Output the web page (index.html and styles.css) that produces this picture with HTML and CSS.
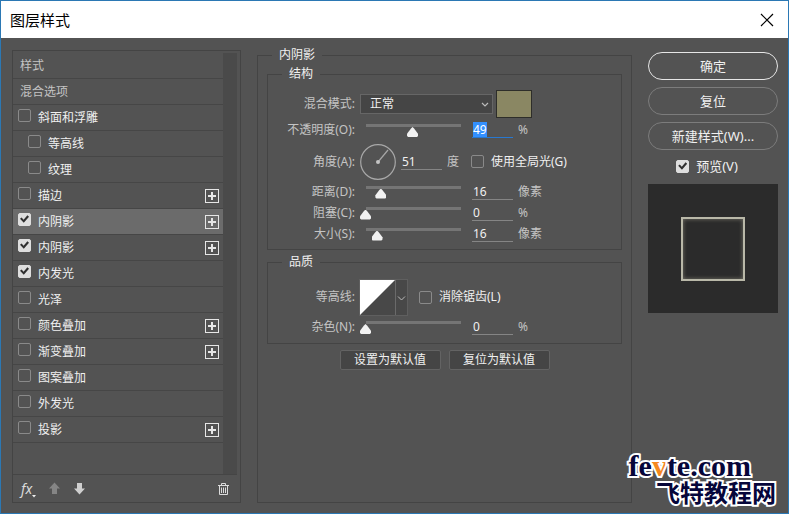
FILE: index.html
```html
<!DOCTYPE html>
<html lang="zh-CN">
<head>
    <meta charset="UTF-8">
    <meta name="viewport" content="width=device-width, initial-scale=1.0">
    <title>图层样式</title>
    <link rel="stylesheet" href="styles.css">
</head>
<body>
    <div class="dialog">
        <header class="titlebar">
            <h1>图层样式</h1>
            <button class="close" aria-label="关闭">
                <svg width="14" height="14" viewBox="0 0 14 14"><path d="M1 1L13 13M13 1L1 13" stroke="#000" stroke-width="1.2"/></svg>
            </button>
        </header>
        <main class="content">
            <aside class="styles-panel">
                <div class="list-wrap">
                    <ul class="style-list">
                        <li class="plain">样式</li>
                        <li class="plain">混合选项</li>
                        <li><label><input type="checkbox">斜面和浮雕</label></li>
                        <li class="sub"><label><input type="checkbox">等高线</label></li>
                        <li class="sub"><label><input type="checkbox">纹理</label></li>
                        <li><label><input type="checkbox">描边</label><button class="add" aria-label="添加描边"></button></li>
                        <li class="selected"><label><input type="checkbox" checked>内阴影</label><button class="add" aria-label="添加内阴影"></button></li>
                        <li><label><input type="checkbox" checked>内阴影</label><button class="add" aria-label="添加内阴影"></button></li>
                        <li><label><input type="checkbox" checked>内发光</label></li>
                        <li><label><input type="checkbox">光泽</label></li>
                        <li><label><input type="checkbox">颜色叠加</label><button class="add" aria-label="添加颜色叠加"></button></li>
                        <li><label><input type="checkbox">渐变叠加</label><button class="add" aria-label="添加渐变叠加"></button></li>
                        <li><label><input type="checkbox">图案叠加</label></li>
                        <li><label><input type="checkbox">外发光</label></li>
                        <li><label><input type="checkbox">投影</label><button class="add" aria-label="添加投影"></button></li>
                    </ul>
                    <div class="scrollbar"></div>
                </div>
                <div class="list-footer">
                    <button class="fx">fx<svg width="4" height="3" viewBox="0 0 4 3"><path d="M0 0H4L2 2.5Z" fill="#eee"/></svg></button>
                    <button class="move" aria-label="上移">
                        <svg width="13" height="13" viewBox="0 0 13 13"><path d="M6.500 .5L12 6.500H9V12H4V6.500H1Z" fill="#858585"/></svg>
                    </button>
                    <button class="move" aria-label="下移">
                        <svg width="13" height="13" viewBox="0 0 13 13"><path d="M6.500 12.500L1 6.500H4V1H9V6.500H12Z" fill="#cfcfcf"/></svg>
                    </button>
                    <button class="trash" aria-label="删除">
                        <svg width="13" height="14" viewBox="0 0 13 14" fill="none" stroke="#dcdcdc"><path d="M1 3.500H12M4.500 3V1.500H8.500V3M2.500 4V12.500H10.500V4M4.500 5.500V11M6.500 5.500V11M8.500 5.500V11"/></svg>
                    </button>
                </div>
            </aside>

            <fieldset class="settings">
                <legend>内阴影</legend>
                <fieldset class="group structure">
                    <legend>结构</legend>
                    <div class="row blend">
                        <label class="name" for="mode">混合模式:</label>
                        <span class="select">
                            <select id="mode"><option>正常</option></select>
                            <svg width="8" height="6" viewBox="0 0 8 6"><path d="M1 1L4 4L7 1" fill="none" stroke="#bbb" stroke-width="1.200"/></svg>
                        </span>
                        <button class="swatch" aria-label="颜色"></button>
                    </div>
                    <div class="row opacity">
                        <label class="name" for="opacity">不透明度(O):</label>
                        <input type="range" value="49" aria-label="不透明度">
                        <input type="text" class="value" id="opacity" value="49">
                        <span class="unit">%</span>
                    </div>
                    <div class="row angle">
                        <label class="name" for="angle">角度(A):</label>
                        <svg class="dial" width="36" height="36" viewBox="0 0 36 36" fill="none" stroke="#a8a8a8">
                            <circle cx="18" cy="18" r="17.300" stroke-width="1.200"/>
                            <path d="M18 18L28 6" stroke-width="1.200"/>
                            <circle cx="18" cy="18" r="2" fill="#c4c4c4" stroke="none"/>
                        </svg>
                        <input type="text" class="value" id="angle" value="51">
                        <span class="unit">度</span>
                        <label class="check"><input type="checkbox">使用全局光(G)</label>
                    </div>
                    <div class="row">
                        <label class="name" for="distance">距离(D):</label>
                        <input type="range" value="16" aria-label="距离">
                        <input type="text" class="value" id="distance" value="16">
                        <span class="unit">像素</span>
                    </div>
                    <div class="row">
                        <label class="name" for="choke">阻塞(C):</label>
                        <input type="range" value="0" aria-label="阻塞">
                        <input type="text" class="value" id="choke" value="0">
                        <span class="unit">%</span>
                    </div>
                    <div class="row">
                        <label class="name" for="size">大小(S):</label>
                        <input type="range" value="12" aria-label="大小">
                        <input type="text" class="value" id="size" value="16">
                        <span class="unit">像素</span>
                    </div>
                </fieldset>
                <fieldset class="group quality">
                    <legend>品质</legend>
                    <div class="row contour-row">
                        <label class="name" for="contour">等高线:</label>
                        <button class="contour" id="contour">
                            <svg width="35" height="35" viewBox="0 0 35 35"><path d="M0 0H35L0 35Z" fill="#fff"/></svg>
                            <svg width="12" height="35" viewBox="0 0 12 35"><path d="M.5 0V35" stroke="#6a6a6a"/><path d="M3 16.500L6.500 20L10 16.500" fill="none" stroke="#bbb"/></svg>
                        </button>
                        <label class="check"><input type="checkbox">消除锯齿(L)</label>
                    </div>
                    <div class="row noise">
                        <label class="name" for="noise">杂色(N):</label>
                        <input type="range" value="0" aria-label="杂色">
                        <input type="text" class="value" id="noise" value="0">
                        <span class="unit">%</span>
                    </div>
                </fieldset>
                <div class="defaults">
                    <button>设置为默认值</button>
                    <button>复位为默认值</button>
                </div>
            </fieldset>

            <section class="actions">
                <button class="pill primary">确定</button>
                <button class="pill">复位</button>
                <button class="pill">新建样式(W)...</button>
                <label class="check"><input type="checkbox" checked>预览(V)</label>
                <div class="preview"><div class="preview-shape"></div></div>
            </section>
        </main>
        <div class="watermark">
            <div class="site">fe<span>v</span>te.com</div>
            <div class="site-name">飞特教程网</div>
        </div>
    </div>
    <script>
        document.getElementById('opacity').select();
    </script>
</body>
</html>
```
FILE: styles.css
```css
* {
    box-sizing: border-box;
}
body {
    margin: 0;
    font-family: "Noto Sans", "Noto Sans CJK SC", sans-serif;
    font-size: 12px;
    line-height: 18px;
    color: #f0f0f0;
    background: #535353;
}
button, input, select {
    font: inherit;
    color: inherit;
    margin: 0;
    padding: 0;
}
button {
    border: 0;
    background: none;
}
svg {
    display: block;
}
.dialog {
    position: relative;
    display: flex;
    flex-direction: column;
    min-height: 100vh;
    border: 1px solid #2b78b4;
}

/* title bar */
.titlebar {
    display: flex;
    align-items: center;
    justify-content: space-between;
    height: 37px;
    padding: 0 14px 0 9px;
    background: #fff;
    color: #000;
}
.titlebar h1 {
    margin: 0;
    font-size: 15px;
    font-weight: normal;
}
.content {
    flex: 1;
    display: grid;
    grid-template-columns: 229px 1fr 130px;
    gap: 16px;
    padding: 8px 10px 10px 11px;
}

/* checkboxes */
input[type="checkbox"] {
    appearance: none;
    display: grid;
    place-content: center;
    flex: none;
    width: 13px;
    height: 13px;
    border: 1px solid #8a8a8a;
    border-radius: 2px;
}
input[type="checkbox"]:checked {
    background: #dedede;
    border-color: #dedede;
}
input[type="checkbox"]:checked::before {
    content: "";
    width: 9px;
    height: 9px;
    background: #303030;
    clip-path: polygon(0 48%, 18% 32%, 40% 58%, 82% 8%, 100% 24%, 42% 92%);
}

/* left list */
.styles-panel {
    display: flex;
    flex-direction: column;
    margin-top: 4px;
    padding: 2px 3px 0 0;
    border: 1px solid #444;
}
.list-wrap {
    flex: 1;
    display: flex;
    border-bottom: 1px solid #454545;
}
.style-list {
    flex: 1;
    margin: 0;
    padding: 0;
    list-style: none;
}
.style-list li {
    display: flex;
    align-items: center;
    justify-content: space-between;
    height: 26px;
    padding: 0 4px 0 5px;
    border-bottom: 1px solid #464646;
}
.style-list .plain {
    padding-left: 7px;
    color: #c4c4c4;
}
.style-list .sub {
    padding-left: 15px;
}
.style-list .selected {
    background: #6b6b6b;
}
.style-list label {
    display: flex;
    gap: 7px;
}
.add {
    width: 14px;
    height: 14px;
    border: 1px solid #e6e6e6;
    background:
        linear-gradient(#e6e6e6, #e6e6e6) center / 8px 2px no-repeat,
        linear-gradient(#e6e6e6, #e6e6e6) center / 2px 8px no-repeat;
}
.scrollbar {
    width: 14px;
    background: #4a4a4a;
}
.list-footer {
    display: flex;
    align-items: center;
    gap: 12px;
    height: 27px;
    padding: 0 7px 0 8px;
}
.fx {
    display: flex;
    align-items: flex-end;
    width: 15px;
    font-size: 14px;
    font-style: italic;
    color: #dcdcdc;
}
.fx svg {
    flex: none;
}
.trash {
    margin-left: auto;
}

/* settings */
fieldset {
    min-width: 0;
    margin: 0;
    border: 1px solid #444;
}
legend {
    height: 18px;
    padding: 0 7px;
}
.settings {
    padding: 1px 9px 0;
}
.settings > legend {
    margin-left: 5px;
}
.group > legend {
    margin-left: 14px;
}
.structure {
    padding: 7px 0 5px;
}
.quality {
    margin-top: 3px;
    padding: 8px 0 4px;
}
.row {
    display: flex;
    align-items: center;
    gap: 5px;
    height: 21px;
}
.blend {
    height: 28px;
}
.opacity, .noise {
    height: 24px;
}
.angle {
    height: 39px;
}
.contour-row {
    height: 36px;
}
.name {
    width: 87px;
    text-align: right;
    color: #c4c4c4;
}
.unit {
    color: #c4c4c4;
}
.select {
    position: relative;
    width: 133px;
    margin-right: -2px;
}
.select select {
    appearance: none;
    display: block;
    width: 100%;
    height: 20px;
    padding: 0 9px;
    border: 1px solid #666;
    border-radius: 0;
    background: #454545;
}
.select svg {
    position: absolute;
    top: 8px;
    right: 4px;
    pointer-events: none;
}
.swatch {
    width: 36px;
    height: 28px;
    border: 1px solid #2e2e2a;
    background: #8a8763;
}
.value {
    width: 41px;
    height: 16px;
    padding: 0 1px;
    border: 0;
    border-bottom: 1px solid #858585;
    outline: 0;
    background: none;
    line-height: 15px;
}
.value:focus {
    border-color: #2878d0;
}
.value::selection {
    background: #3390ff;
    color: #fff;
}

/* slider: the handle hangs under a thin track */
input[type="range"] {
    appearance: none;
    width: 107px;
    height: 14px;
    margin-top: 2px;
    background: linear-gradient(#757575, #757575) 6px 0 / 95px 3px no-repeat;
}
input[type="range"]::-webkit-slider-runnable-track {
    height: 14px;
}
input[type="range"]::-webkit-slider-thumb {
    appearance: none;
    width: 11px;
    height: 10px;
    margin-top: 3px;
    background: #f2f2f2;
    clip-path: polygon(50% 0, 64% 14%, 100% 68%, 100% 90%, 90% 100%, 10% 100%, 0 90%, 0 68%, 36% 14%);
}
.check {
    display: flex;
    align-items: center;
    gap: 7px;
}
.row .check {
    margin-left: 7px;
}
.contour {
    display: flex;
    background: #484848;
    outline: 1px solid #5f5f5f;
}
.defaults {
    display: flex;
    justify-content: center;
    gap: 8px;
    margin-top: 6px;
}
.defaults button {
    width: 101px;
    height: 20px;
    border: 1px solid #636363;
    border-radius: 2px;
    background: #454545;
}

/* right column */
.actions {
    display: flex;
    flex-direction: column;
    gap: 7px;
    padding-top: 6px;
    font-size: 13px;
}
.pill {
    height: 28px;
    border: 1px solid #7c7c7c;
    border-radius: 14px;
}
.primary {
    border-color: #e6e6e6;
}
.actions .check {
    align-self: center;
    margin-right: 12px;
}
.preview {
    display: grid;
    place-content: center;
    height: 129px;
    margin-top: 2px;
    background: #2b2b2b;
}
.preview-shape {
    width: 64px;
    height: 64px;
    border: 2px solid #b9b8a8;
    box-shadow: inset 0 0 4px #77756a;
}

/* site mark over the corner */
.watermark {
    position: absolute;
    right: 12px;
    bottom: 9px;
    color: #06063a;
    font-weight: bold;
    -webkit-text-stroke: 4px #fff;
    paint-order: stroke fill;
    pointer-events: none;
}
.site {
    margin-right: 25px;
    font-family: "Liberation Serif", serif;
    font-size: 30px;
    line-height: 28px;
    text-align: right;
}
.site span {
    color: #f58a1f;
}
.site-name {
    font-family: "Noto Sans CJK SC", sans-serif;
    font-size: 24px;
    line-height: 24px;
    text-align: right;
}
```
